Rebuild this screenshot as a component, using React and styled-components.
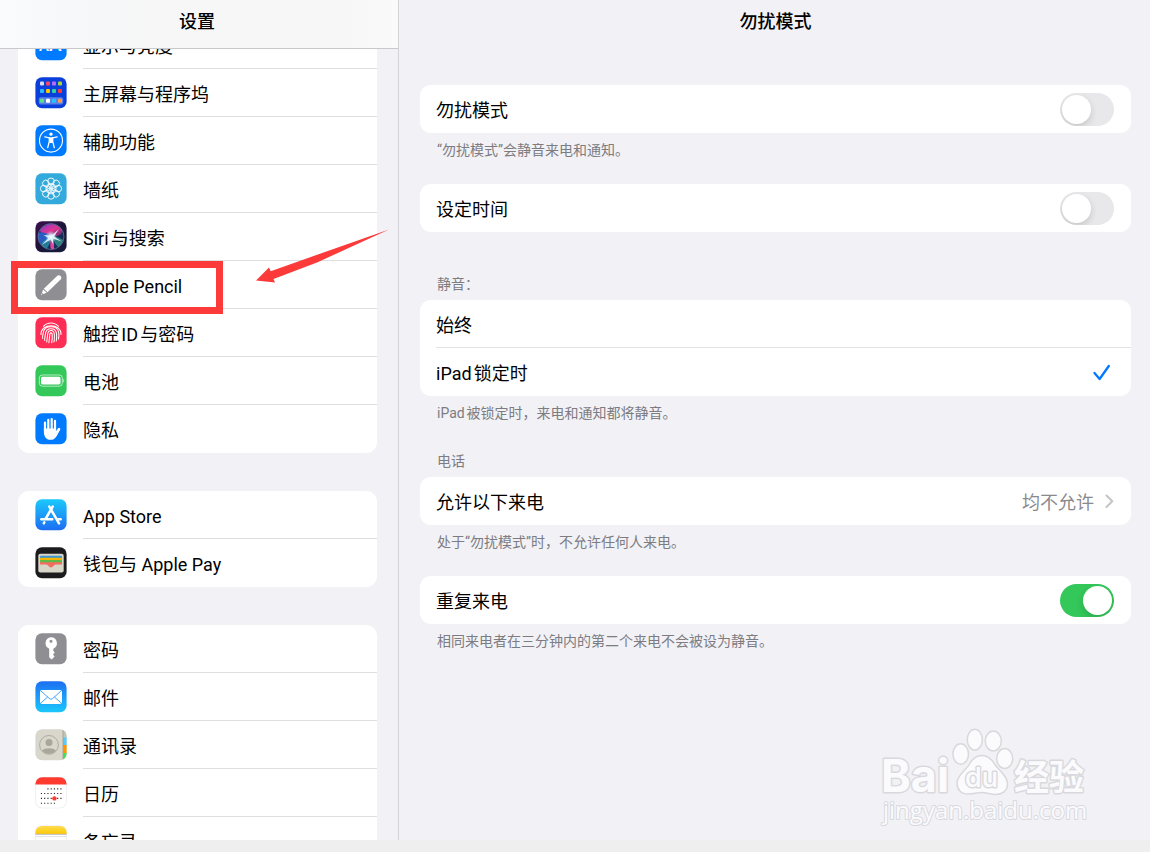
import React, { useLayoutEffect, useRef, useState } from 'react'
import { styled, createGlobalStyle } from 'styled-components'

const GlobalStyle = createGlobalStyle`
  *{
    box-sizing: border-box;
  }
  body{
    margin: 0;
    background: #efefef;
    color: #000;
    font-family: Roboto, "Noto Sans CJK SC", sans-serif;
    font-size: 18px;
    line-height: 24px;
    text-autospace: normal;
  }
`

/* ---------- icons, all on a 32 x 32 grid ---------- */

function Tile({ fill, children }) {
  return (
    <svg width="32" height="32" viewBox="0 0 32 32" aria-hidden="true">
      <rect x="0.4" y="0.3" width="31.2" height="31" rx="6.6" fill={fill} />
      {children}
    </svg>
  )
}

const DisplayIcon = () => (
  <Tile fill="#007aff">
    <text x="4" y="22" fontSize="15" fontWeight="500" fill="#fff">A</text>
    <text x="14" y="22" fontSize="19" fontWeight="500" fill="#fff">A</text>
  </Tile>
)

const homeApps = [
  ['#d9dbe6', '#ff4563', '#b56bff', '#a5d63a'],
  ['#27bdfb', '#ffc700', '#35d3a0', '#ff3a33'],
  ['#5ce183', '#ffffff', '#22c7ff', '#ff9a4c'],
]
const homeRows = [6.5, 14, 23.8]

const HomeIcon = () => (
  <Tile fill="#0a3fdb">
    <rect x="3.8" y="20.200" width="24.4" height="7.2" rx="2" fill="#5b80ea" />
    {homeApps.map((row, r) =>
      row.map((color, c) => (
        <rect key={`${r}-${c}`} x={5 + c * 6} y={homeRows[r] - 2} width="4" height="4" rx="1" fill={color} />
      ))
    )}
  </Tile>
)

const AccessIcon = () => (
  <Tile fill="#007aff">
    <circle cx="16" cy="15.6" r="11.5" fill="none" stroke="#fff" strokeWidth="1.1" />
    <circle cx="16" cy="9.2" r="1.6" fill="#fff" />
    <path
      d="M9.8 11.9 14.3 12.8V16.4L12.7 22.6M22.2 11.9 17.7 12.8V16.4L19.3 22.6"
      fill="none" stroke="#fff" strokeWidth="1.3" strokeLinecap="round" strokeLinejoin="round"
    />
    <path d="M14 12.3h4v4.6l-.8 1.2h-2.4l-.8-1.2z" fill="#fff" />
  </Tile>
)

const WallpaperIcon = () => (
  <Tile fill="#34aadc">
    <g fill="none" stroke="#fff" strokeWidth="0.9">
      {[0, 45, 90, 135, 180, 225, 270, 315].map((a) => (
        <g key={a} transform={`rotate(${a} 16 15.6)`}>
          <circle cx="16" cy="8.300" r="3.300" />
          <circle cx="16" cy="12.400" r="2.100" strokeWidth="0.700" />
        </g>
      ))}
    </g>
    <circle cx="16" cy="15.6" r="0.900" fill="#fff" />
  </Tile>
)

const SiriIcon = () => (
  <Tile fill="url(#siriBg)">
    <defs>
      <linearGradient id="siriBg" x1="0" y1="0" x2="1" y2="1">
        <stop offset="0" stopColor="#3d0f4e" />
        <stop offset="0.5" stopColor="#1c1538" />
        <stop offset="1" stopColor="#141c3c" />
      </linearGradient>
      <linearGradient id="siriTop" x1="0" y1="0" x2="1" y2="1">
        <stop offset="0" stopColor="#7a3bd0" />
        <stop offset="0.5" stopColor="#e2348f" />
        <stop offset="1" stopColor="#5a2a6a" />
      </linearGradient>
      <radialGradient id="siriGlow">
        <stop offset="0" stopColor="#fff" />
        <stop offset="0.35" stopColor="#e4f4ff" stopOpacity="0.8" />
        <stop offset="1" stopColor="#9ad8ff" stopOpacity="0" />
      </radialGradient>
    </defs>
    <circle cx="16" cy="15.6" r="13" fill="#1a2c58" />
    <path d="M5 10C9 1 23 1 27.500 10C26 16 20 15 16 15.600C11 14 7 13 5 10z" fill="url(#siriTop)" />
    <path d="M3.500 12C8 10 13 13 16 15.600C12 19 8 23 5.500 22.500C3 19 3 15 3.500 12z" fill="#2a5cc0" />
    <path d="M6 23C9 19 13 17 16 15.600C16 20 14 25 12 27.500C9 27 7 25 6 23z" fill="#2c9cb0" opacity="0.7" />
    <path d="M16 15.600C21 15 26 17 28 19C27 23 25 25 23 26C20 23 18 19 16 15.600z" fill="#2f958b" opacity="0.8" />
    <path d="M16 15.600C18 19 19.500 24 19 28C17 28.500 16 28 15.500 27C15 23 15.500 19 16 15.600z" fill="#e0449c" />
    <circle cx="16" cy="15.6" r="13" fill="none" stroke="#8fa8c8" strokeWidth="0.7" opacity="0.7" />
    <circle cx="16" cy="15.6" r="6" fill="url(#siriGlow)" />
    <path d="M16.500 14.500 24 8 19 15.500 27 20.500 18.200 17.800 18.500 24 15.700 18.500 6.500 24 13.500 17 8.500 14 14.500 14.500z" fill="#e9fbff" opacity="0.85" />
  </Tile>
)

const PencilIcon = () => (
  <Tile fill="#8e8e93">
    <path d="M22.600 6.600a2.600 2.600 0 0 1 3.500 3.500L12.500 23.200 8.800 19.700z" fill="#fff" />
    <path d="M8.200 20.400 11.700 23.700 8.300 25 7 23.800z" fill="#fff" />
    <path d="M6.600 24.500 7.500 25.300 5.900 26.300z" fill="#fff" />
  </Tile>
)

const TouchIcon = () => (
  <Tile fill="#ff2d55">
    <g fill="none" stroke="#fff" strokeWidth="1.05" strokeLinecap="round">
      <path d="M8.500 9.300C12.500 4.800 19.500 4.800 23.500 9.300" />
      <path d="M6 17.500C5.500 6 26.500 6 26 17.500" />
      <path d="M7.700 21.500C7.200 19 8 17.500 8.300 15.500C9.500 7.800 22.500 7.800 23.700 15.500C24 18 24 20 23.500 22" />
      <path d="M9.700 23.500C9.500 21 10.200 19 10.500 16.500C11.300 10.200 20.700 10.200 21.500 16.500C21.800 19 21.700 21.500 21.300 24" />
      <path d="M11.800 25C12 21.500 12.500 19.500 12.700 17C13.300 12.400 18.700 12.400 19.300 17C19.600 20 19.400 22.500 19 25" />
      <path d="M13.900 25.700C14.300 22 14.600 20 14.800 17.300C15 15.400 17 15.400 17.200 17.300C17.400 20.500 17.100 23.500 16.700 25.700" />
    </g>
  </Tile>
)

const BatteryIcon = () => (
  <Tile fill="#34c759">
    <rect x="4.300" y="10" width="23" height="11.200" rx="3" fill="none" stroke="#fff" strokeWidth="0.8" opacity="0.8" />
    <rect x="6" y="11.800" width="19.500" height="7.600" rx="1.600" fill="#fff" />
    <path d="M28.300 13.800c1.200.5 1.200 3.100 0 3.600z" fill="#fff" opacity="0.8" />
  </Tile>
)

const HandIcon = () => (
  <Tile fill="#007aff">
    <g stroke="#fff" strokeWidth="2.200" strokeLinecap="round" fill="none">
      <path d="M10 9.500V18M13.300 6.800V17M16.700 6V17M20 7.800V18" />
      <path d="M24 16.200 20.800 21" strokeWidth="2.600" />
    </g>
    <path d="M8.900 15.500H21.100V18.500L24.600 17C23.500 19.500 22.500 22 21 24C19.500 26.200 18 26.800 15.500 26.800C11 26.800 8.900 23.500 8.900 19z" fill="#fff" />
  </Tile>
)

const StoreIcon = () => (
  <Tile fill="url(#storeBg)">
    <defs>
      <linearGradient id="storeBg" x1="0" y1="0" x2="0" y2="1">
        <stop offset="0" stopColor="#1bc9fc" />
        <stop offset="1" stopColor="#1d6df2" />
      </linearGradient>
    </defs>
    <g fill="none" stroke="#fff" strokeWidth="2.500" strokeLinecap="round">
      <path d="M17.700 7.600 10.800 19.500" />
      <path d="M14.300 7.600 24 24.300" />
      <path d="M6.300 20.200H17.300M22.500 20.200H25.700" />
      <path d="M9.300 23.400 8.800 24.300" />
    </g>
  </Tile>
)

const WalletIcon = () => (
  <Tile fill="#1c1c1e">
    <rect x="3.300" y="6.800" width="25.400" height="18.700" rx="2" fill="#d8d5c9" />
    <rect x="5" y="8.800" width="22" height="4" rx="1" fill="#3a98d0" />
    <rect x="5" y="10.800" width="22" height="4" rx="0.800" fill="#f7b500" />
    <rect x="5" y="13" width="22" height="4" rx="0.800" fill="#5fb946" />
    <path d="M5 15.300H27V17.600H20.500C19 17.600 18 20.500 16 20.500C14 20.500 13 17.600 11.500 17.600H5z" fill="#f26d5f" />
  </Tile>
)

const KeyIcon = () => (
  <Tile fill="#8e8e93">
    <path
      fillRule="evenodd"
      d="M16 4.200a6 6 0 0 1 2.300 11.500V18l1.500 1.500-1.500 1.600v1l1.300 1.300-3 3.200-2.400-2.300v-8.600A6 6 0 0 1 16 4.200zM16 6.800a1.500 1.500 0 1 0 0 3 1.500 1.500 0 1 0 0-3z"
      fill="#fff"
    />
  </Tile>
)

const MailIcon = () => (
  <Tile fill="url(#mailBg)">
    <defs>
      <linearGradient id="mailBg" x1="0" y1="0" x2="0" y2="1">
        <stop offset="0" stopColor="#1d70f2" />
        <stop offset="1" stopColor="#1ac7fc" />
      </linearGradient>
    </defs>
    <rect x="5" y="8.900" width="22" height="14" rx="1.800" fill="#fff" />
    <path
      d="M5.500 9.500 14.300 17.500C15.300 18.400 16.700 18.400 17.700 17.500L26.500 9.500M5.500 22.300 12.600 16M26.500 22.300 19.400 16"
      fill="none" stroke="#2b9bf6" strokeWidth="0.900"
    />
  </Tile>
)

const ContactsIcon = () => (
  <Tile fill="#d9d6cb">
    <defs>
      <clipPath id="tabs">
        <rect x="0.400" y="0.300" width="31.200" height="31" rx="6.600" />
      </clipPath>
    </defs>
    <g clipPath="url(#tabs)">
      <path d="M28.200 0H32V8.300H28.200z" fill="#c5c2b6" />
      <path d="M28.200 8.300H32V16H28.200z" fill="#5ac8fa" />
      <path d="M28.200 16H32V24H28.200z" fill="#ff9500" />
      <path d="M28.200 24H32V32H28.200z" fill="#4cd964" />
      <path d="M28 0V32" stroke="#8c897f" strokeWidth="0.600" />
    </g>
    <circle cx="14" cy="15.900" r="9.400" fill="none" stroke="#a9a69c" strokeWidth="0.900" />
    <circle cx="14" cy="13.500" r="3.500" fill="#a9a69c" />
    <path d="M7.200 21.400C9.500 18.500 18.500 18.500 20.800 21.400C18 25.700 10 25.700 7.200 21.400z" fill="#a9a69c" />
  </Tile>
)

const calendarDots = [
  { y: 11.900, from: 2, to: 6 },
  { y: 16.500, from: 0, to: 6 },
  { y: 21.400, from: 0, to: 6 },
  { y: 26.200, from: 0, to: 4 },
]

const CalendarIcon = () => (
  <Tile fill="#e4e4e6">
    <rect x="0.900" y="0.600" width="30.200" height="30.200" rx="6.200" fill="#fff" />
    <path d="M0.400 7.500V6.900A6.600 6.600 0 0 1 7 0.300H25A6.600 6.600 0 0 1 31.600 6.900V7.500z" fill="#ff3b30" />
    {calendarDots.map(({ y, from, to }) => (
      <path
        key={y}
        d={`M${5.900 + from * 3.250} ${y}H${7 + to * 3.250}`}
        stroke="#222" strokeWidth="1.100" strokeDasharray="1.1 2.150"
      />
    ))}
    <circle cx="19.400" cy="21.400" r="2.200" fill="#ff3b30" />
  </Tile>
)

const NotesIcon = () => (
  <Tile fill="#e4e4e6">
    <defs>
      <linearGradient id="notesTop" x1="0" y1="0" x2="0" y2="1">
        <stop offset="0" stopColor="#fddb4f" />
        <stop offset="1" stopColor="#fecb05" />
      </linearGradient>
    </defs>
    <rect x="0.900" y="0.600" width="30.200" height="30.200" rx="6.200" fill="#fff" />
    <path d="M0.400 8.900V7.500A6.600 6.600 0 0 1 7 0.900H25A6.600 6.600 0 0 1 31.600 7.500V8.900z" fill="url(#notesTop)" />
    <path d="M0.400 9.300H31.600" stroke="#b0b0b2" strokeWidth="0.900" />
    <path d="M1.500 11.500H31" stroke="#bcbcbe" strokeWidth="0.900" strokeDasharray="0.900 1.100" />
  </Tile>
)

const menu = [
  [
    { id: 'display', label: '显示与亮度', Icon: DisplayIcon },
    { id: 'home', label: '主屏幕与程序坞', Icon: HomeIcon },
    { id: 'accessibility', label: '辅助功能', Icon: AccessIcon },
    { id: 'wallpaper', label: '墙纸', Icon: WallpaperIcon },
    { id: 'siri', label: 'Siri与搜索', Icon: SiriIcon },
    { id: 'pencil', label: 'Apple Pencil', Icon: PencilIcon, marked: true },
    { id: 'touch', label: '触控ID与密码', Icon: TouchIcon },
    { id: 'battery', label: '电池', Icon: BatteryIcon },
    { id: 'privacy', label: '隐私', Icon: HandIcon },
  ],
  [
    { id: 'store', label: 'App Store', Icon: StoreIcon },
    { id: 'wallet', label: '钱包与 Apple Pay', Icon: WalletIcon },
  ],
  [
    { id: 'passwords', label: '密码', Icon: KeyIcon },
    { id: 'mail', label: '邮件', Icon: MailIcon },
    { id: 'contacts', label: '通讯录', Icon: ContactsIcon },
    { id: 'calendar', label: '日历', Icon: CalendarIcon },
    { id: 'notes', label: '备忘录', Icon: NotesIcon },
  ],
]

function Sidebar() {
  const scroller = useRef(null)

  // the list opens a little way down, under the title bar
  useLayoutEffect(() => {
    scroller.current.scrollTop = 28
  }, [])

  return (
    <SideStyled>
      <SideTitle>设置</SideTitle>
      <Scroller ref={scroller}>
        {menu.map((group) => (
          <MenuGroup key={group[0].id}>
            {group.map(({ id, label, Icon, marked }) => (
              <MenuItem key={id}>
                <MenuLink href={`#${id}`}>
                  <Icon />
                  <span>{label}</span>
                </MenuLink>
                {marked && (
                  <>
                    <Marker />
                    <Arrow viewBox="0 0 136 56" aria-hidden="true">
                      <path d="M1 51.500 14 38.500 15.700 42.300 60 26.500 134 0.500 62 33.500 18.500 50 20 53.500z" />
                    </Arrow>
                  </>
                )}
              </MenuItem>
            ))}
          </MenuGroup>
        ))}
      </Scroller>
    </SideStyled>
  )
}

function Watermark() {
  return (
    <MarkStyled viewBox="0 0 216 108" aria-hidden="true">
      <text className="bold" x="5" y="70" fontSize="45">Bai</text>
      <ellipse cx="84.700" cy="32" rx="7.800" ry="10.200" />
      <ellipse cx="98.800" cy="17.700" rx="7.500" ry="10.400" />
      <ellipse cx="117.300" cy="19" rx="8" ry="10" />
      <ellipse cx="128.700" cy="36.500" rx="8" ry="10" />
      <path d="M106 33.500C112 33.500 115.500 37 118.500 42C122 48 131.500 53 131.500 62C131.500 69 126 72.500 120 72.500C114 72.500 111 70.500 106 70.500C101 70.500 98 72 92 72C85 72 81 67.500 81 61C81 53 90 48.500 93.500 42C96 37.500 100 33.500 106 33.500z" />
      <text className="du" x="89" y="65" fontSize="27">du</text>
      <text className="bold" x="138" y="68" fontSize="35">经验</text>
      <text className="url" x="7" y="97" fontSize="24">jingyan.baidu.com</text>
    </MarkStyled>
  )
}

export default function App() {
  const [dnd, setDnd] = useState(false)
  const [scheduled, setScheduled] = useState(false)
  const [repeated, setRepeated] = useState(true)
  const [silence, setSilence] = useState('locked')

  return (
    <>
      <GlobalStyle />
      <Layout>
        <Sidebar />
        <Main>
          <MainTitle>勿扰模式</MainTitle>

          <Section>
            <Card>
              <Row>
                <RowText>勿扰模式</RowText>
                <Switch type="checkbox" checked={dnd} onChange={() => setDnd(!dnd)} />
              </Row>
            </Card>
            <Note>“勿扰模式”会静音来电和通知。</Note>
          </Section>

          <Section $plain>
            <Card>
              <Row>
                <RowText>设定时间</RowText>
                <Switch type="checkbox" checked={scheduled} onChange={() => setScheduled(!scheduled)} />
              </Row>
            </Card>
          </Section>

          <Section>
            <Caption>静音：</Caption>
            <Card>
              {[['always', '始终'], ['locked', 'iPad锁定时']].map(([value, label]) => (
                <Row key={value}>
                  <RowText>{label}</RowText>
                  <Radio name="silence" type="radio" checked={silence === value} onChange={() => setSilence(value)} />
                  {silence === value && (
                    <svg width="24" height="24" viewBox="0 0 24 24" aria-hidden="true">
                      <path d="M4.500 13 9.600 19 18.800 6" fill="none" stroke="#007aff" strokeWidth="2.300" strokeLinecap="round" strokeLinejoin="round" />
                    </svg>
                  )}
                </Row>
              ))}
            </Card>
            <Note>iPad被锁定时，来电和通知都将静音。</Note>
          </Section>

          <Section>
            <Caption>电话</Caption>
            <Card>
              <Row as="button" type="button">
                <RowText>允许以下来电</RowText>
                <Value>
                  <RowText>均不允许</RowText>
                  <svg width="12" height="16" viewBox="0 0 12 16" aria-hidden="true">
                    <path d="M4.500 2.500 10.300 8.200 4.500 14" fill="none" stroke="#c4c4c7" strokeWidth="2" strokeLinecap="round" strokeLinejoin="round" />
                  </svg>
                </Value>
              </Row>
            </Card>
            <Note>处于“勿扰模式”时，不允许任何人来电。</Note>
          </Section>

          <Section>
            <Card>
              <Row>
                <RowText>重复来电</RowText>
                <Switch type="checkbox" checked={repeated} onChange={() => setRepeated(!repeated)} />
              </Row>
            </Card>
            <Note>相同来电者在三分钟内的第二个来电不会被设为静音。</Note>
          </Section>

          <Watermark />
        </Main>
      </Layout>
    </>
  )
}

const Layout = styled.div`
  display: grid;
  grid-template-columns: 399px 1fr;
  height: calc(100vh - 12px);
  background: #f2f1f6;
`

const SideStyled = styled.nav`
  display: flex;
  flex-direction: column;
  min-height: 0;
  border-right: 1px solid #d3d3d8;
`

const SideTitle = styled.h1`
  flex: none;
  margin: 0;
  padding: 10px 4px 14px 0;
  font-size: 18px;
  font-weight: 500;
  line-height: 24px;
  text-align: center;
  background: linear-gradient(90deg, #fafbfc, #f6f8fa 15%, #f7f7f7 40%, #f7f7f7 85%, #fafafa);
  border-bottom: 1px solid #c9c9cd;
`

const Scroller = styled.div`
  flex: 1;
  min-height: 0;
  padding: 0 21px 0 18px;
  overflow-x: hidden;
  overflow-y: auto;
  scrollbar-width: none;
`

const MenuGroup = styled.ul`
  list-style: none;
  margin: 0 0 38px;
  padding: 0;
  background: #fff;
  border-radius: 11px;
`

const MenuItem = styled.li`
  position: relative;
`

const MenuLink = styled.a`
  display: flex;
  align-items: center;
  gap: 16px;
  height: 48px;
  padding-left: 17px;
  color: inherit;
  text-decoration: none;
  span{
    flex: 1;
    height: 48px;
    padding-top: 3px;
    line-height: 46px;
    border-bottom: 1px solid #dededf;
  }
  ${MenuItem}:last-child & span{
    border-bottom: 0;
  }
`

const Marker = styled.div`
  position: absolute;
  z-index: 1;
  top: 0;
  left: -7px;
  width: 212px;
  height: 53px;
  border: 7px solid #fc3a39;
  pointer-events: none;
`

const Arrow = styled.svg`
  position: absolute;
  z-index: 1;
  top: -32px;
  left: 237px;
  width: 136px;
  height: 56px;
  fill: #fc3a39;
  pointer-events: none;
`

const Main = styled.main`
  position: relative;
  min-width: 0;
  padding: 0 19px 0 21px;
`

const MainTitle = styled.h2`
  margin: 0;
  padding: 10px 0 51px;
  font-size: 18px;
  font-weight: 500;
  line-height: 24px;
  text-align: center;
`

const Section = styled.section`
  margin-bottom: ${({ $plain }) => ($plain ? '38px' : '25px')};
`

const Card = styled.div`
  background: #fff;
  border-radius: 11px;
`

const Row = styled.label`
  position: relative;
  display: flex;
  align-items: center;
  justify-content: space-between;
  width: 100%;
  height: 48px;
  padding: 0 17px 0 16px;
  border: 0;
  background: none;
  color: inherit;
  font: inherit;
  text-align: left;
  cursor: pointer;
  & + &::before{
    content: "";
    position: absolute;
    top: -1px;
    left: 16px;
    right: 0;
    height: 1px;
    background: #e3e3e5;
  }
`

const RowText = styled.span`
  padding-top: 3px;
`

const Value = styled.span`
  display: flex;
  align-items: center;
  gap: 8px;
  color: #8a8a8e;
`

const Switch = styled.input`
  appearance: none;
  flex: none;
  width: 54px;
  height: 33px;
  margin: 0;
  padding: 2px;
  border-radius: 17px;
  overflow: hidden;
  background: #e8e8ea;
  cursor: pointer;
  &::before{
    content: "";
    display: block;
    width: 29px;
    height: 29px;
    border-radius: 50%;
    background: #fff;
    box-shadow: 0 3px 7px rgba(0, 0, 0, 0.15);
  }
  &:checked{
    background: #34c759;
  }
  &:checked::before{
    margin-left: auto;
  }
`

const Radio = styled.input`
  position: absolute;
  opacity: 0;
`

const Caption = styled.h3`
  margin: 0;
  padding: 5px 17px 7px;
  font-size: 14px;
  font-weight: 400;
  line-height: 18px;
  color: #7c7c81;
`

const Note = styled.p`
  margin: 0;
  padding: 8px 17px 0;
  font-size: 14px;
  line-height: 18px;
  color: #7c7c81;
`

const MarkStyled = styled.svg`
  position: absolute;
  right: 58px;
  bottom: 10px;
  width: 216px;
  height: 108px;
  fill: #fbfbfd;
  stroke: #d9d9dd;
  stroke-width: 1.5px;
  text{
    paint-order: stroke;
    stroke-width: 3px;
    stroke-linejoin: round;
  }
  .bold{
    font-family: Inter, "Noto Sans CJK SC", sans-serif;
    font-weight: 700;
  }
  .du{
    font-family: Inter, sans-serif;
    font-weight: 500;
  }
  .url{
    font-family: "Open Sans", sans-serif;
    stroke-width: 2px;
  }
`
